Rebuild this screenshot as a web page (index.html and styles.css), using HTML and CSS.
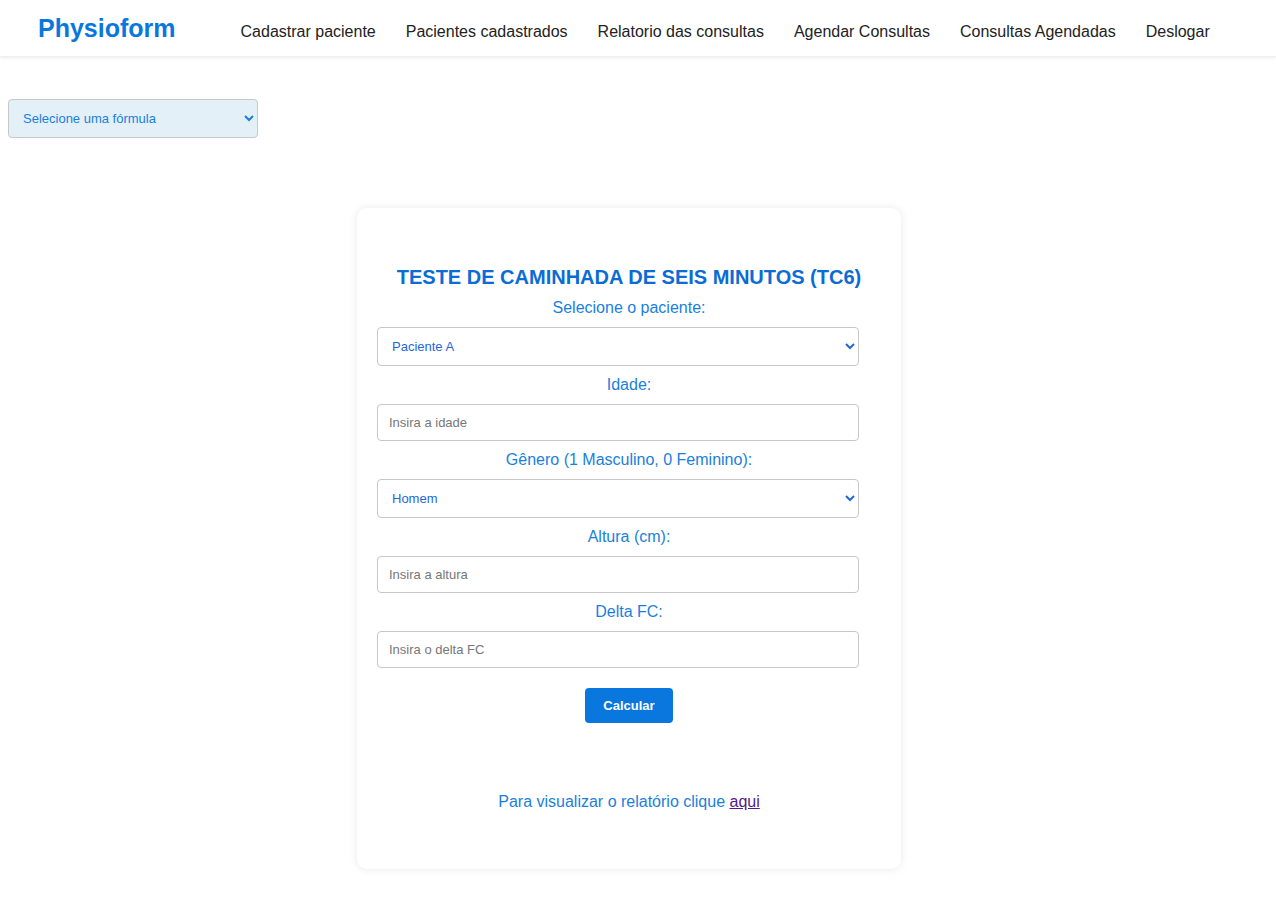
FILE: index.html
```html
<!DOCTYPE html>
<html lang="pt-BR">
<head>
<meta charset="utf-8">
<title>Physioform</title>
<link rel="stylesheet" href="styles.css">
</head>
<body>
<header class="navbar">
  <a class="logo" href="#">Physioform</a>
  <nav class="nav-links">
    <a href="#">Cadastrar paciente</a>
    <a href="#">Pacientes cadastrados</a>
    <a href="#">Relatorio das consultas</a>
    <a href="#">Agendar Consultas</a>
    <a href="#">Consultas Agendadas</a>
    <a href="#">Deslogar</a>
  </nav>
</header>
<main>
  <div class="formula-bar">
    <select class="formula-select">
      <option>Selecione uma fórmula</option>
    </select>
  </div>
  <div class="card-wrap">
    <section class="card">
      <h2 class="card-title">TESTE DE CAMINHADA DE SEIS MINUTOS (TC6)</h2>
      <label class="field-label">Selecione o paciente:</label>
      <select class="field field-select"><option>Paciente A</option></select>
      <label class="field-label">Idade:</label>
      <input class="field field-input" type="text" placeholder="Insira a idade">
      <label class="field-label">Gênero (1 Masculino, 0 Feminino):</label>
      <select class="field field-select"><option>Homem</option></select>
      <label class="field-label">Altura (cm):</label>
      <input class="field field-input" type="text" placeholder="Insira a altura">
      <label class="field-label">Delta FC:</label>
      <input class="field field-input" type="text" placeholder="Insira o delta FC">
      <div class="btn-row"><button class="btn-calc">Calcular</button></div>
      <p class="report-text">Para visualizar o relatório clique <a href="#" class="report-link">aqui</a></p>
    </section>
  </div>
</main>
</body>
</html>
```

FILE: styles.css
```css
* { box-sizing: border-box; }
body {
  margin: 0;
  font-family: "Liberation Sans", Arial, sans-serif;
  background: #fff;
}
.navbar {
  height: 57px;
  display: flex;
  align-items: center;
  padding-left: 38px;
  background: #fff;
  box-shadow: 0 1px 3px rgba(0,0,0,0.08);
  border-bottom: 1px solid #f0f0f0;
}
.logo {
  font-size: 25px;
  font-weight: bold;
  color: #0a77de;
  text-decoration: none;
}
.nav-links {
  display: flex;
  gap: 30px;
  margin-left: 65px;
  padding-top: 8px;
}
.nav-links a {
  font-size: 16px;
  color: #222;
  text-decoration: none;
}
.formula-bar {
  padding: 42px 8px 0;
}
.formula-select {
  width: 250px;
  height: 39px;
  padding: 0 10px 0 10px;
  font-family: "Liberation Sans", Arial, sans-serif;
  font-size: 13px;
  color: #1a7fdc;
  background: #e3f0f8;
  border: 1px solid #c8c8c8;
  border-radius: 4px;
}
.card-wrap {
  display: flex;
  justify-content: center;
  padding: 70px 18px 40px 0;
}
.card {
  width: 544px;
  padding: 57px 20px 57px;
  background: #fff;
  border-radius: 10px;
  box-shadow: 0 0 10px rgba(0,0,0,0.09);
  display: flex;
  flex-direction: column;
  align-items: stretch;
}
.card-title {
  margin: 0 0 9px;
  font-size: 20px;
  line-height: 24px;
  font-weight: bold;
  color: #0a6cd4;
  text-align: center;
  white-space: nowrap;
}
.field-label {
  display: block;
  margin: 9px 0 9px;
  font-size: 16px;
  line-height: 20px;
  color: #1a7fdc;
  text-align: center;
}
.card-title + .field-label { margin-top: 0; }
.field {
  width: 482px;
  align-self: flex-start;
  font-family: "Liberation Sans", Arial, sans-serif;
  font-size: 13px;
  border: 1px solid #c8c8c8;
  border-radius: 4px;
  background: #fff;
}
.field-select {
  height: 39px;
  padding: 0 8px 0 10px;
  color: #2468d8;
}
.field-input {
  height: 37px;
  padding: 0 11px;
  color: #333;
}
.field-input::placeholder { color: #777; }
.btn-row {
  display: flex;
  justify-content: center;
  margin-top: 20px;
}
.btn-calc {
  width: 88px;
  height: 35px;
  background: #0a77de;
  color: #fff;
  border: none;
  border-radius: 4px;
  font-family: "Liberation Sans", Arial, sans-serif;
  font-size: 13px;
  font-weight: bold;
}
.report-text {
  margin: 69px 0 0;
  font-size: 16px;
  line-height: 20px;
  color: #1a7fdc;
  text-align: center;
}
.report-link { color: #551a8b; }
```
